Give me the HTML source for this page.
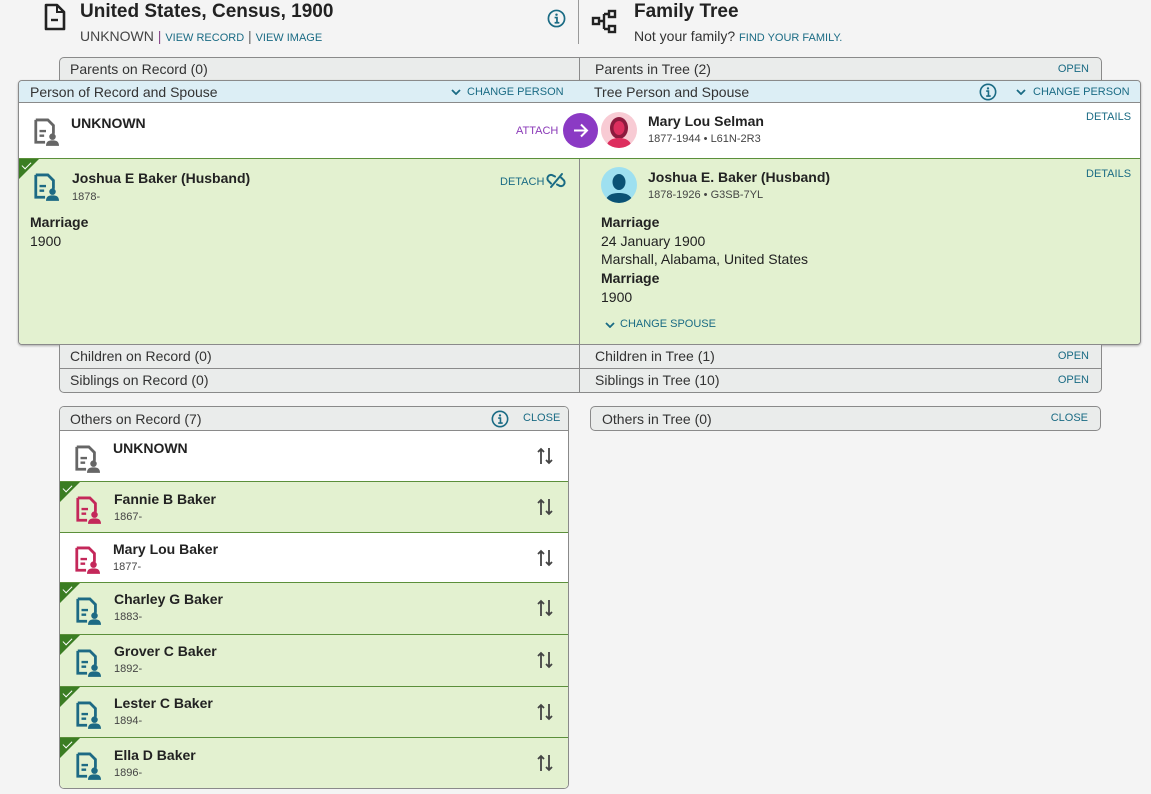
<!DOCTYPE html>
<html><head><meta charset="utf-8"><style>
*{box-sizing:border-box;margin:0;padding:0}
body{width:1151px;height:794px;background:#f4f4f4;font-family:"Liberation Sans",sans-serif;color:#222;position:relative;overflow:hidden}
.a{position:absolute}
.lnk{color:#1a6b84;font-size:11px;text-transform:uppercase}
.bar{position:absolute;background:#eaeceb;border:1px solid #8a8a8a;font-size:14px;color:#333}
.bar span{position:absolute;top:3px}
.nm{font-weight:bold;font-size:14px;color:#222}
.sm{font-size:11px;color:#444}
.tri{position:absolute;left:0;top:0;width:0;height:0;border-top:20px solid #3b7d23;border-right:20px solid transparent}
.tri:after{content:"";position:absolute;left:3px;top:-17px;width:8px;height:4px;border-left:1.5px solid #fff;border-bottom:1.5px solid #fff;transform:rotate(-45deg)}
.row{position:absolute;left:0;width:509px;border-bottom:1px solid #8a8a8a}
.row.g{background:#e3f1d0;border:1px solid #5b8f3a;left:-1px;width:511px}
.sw{position:absolute;right:16px;top:16px}
</style></head><body>
<svg width="0" height="0" style="position:absolute">
<defs>
<symbol id="rec" viewBox="0 0 28 30"><path d="M3 2h13l6 6v9" fill="none" stroke="currentColor" stroke-width="3"/><path d="M3 2v24h10" fill="none" stroke="currentColor" stroke-width="3"/><path d="M7 14h7M7 19h5" stroke="currentColor" stroke-width="2.5"/><circle cx="21" cy="20" r="3.5" fill="currentColor"/><path d="M14 30c0-5 3-6 7-6s7 1 7 6z" fill="currentColor"/></symbol>
<symbol id="swp" viewBox="0 0 16 18"><path d="M4 17V2M1 5l3-3 3 3M12 1v15M9 13l3 3 3-3" fill="none" stroke="#444" stroke-width="1.8"/></symbol>
<symbol id="inf" viewBox="0 0 20 20"><circle cx="10" cy="10" r="8.5" fill="none" stroke="#1a6b84" stroke-width="1.8"/><circle cx="10" cy="6" r="1.3" fill="#1a6b84"/><path d="M8 9h2.5v5.5M8 14.5h5" fill="none" stroke="#1a6b84" stroke-width="1.8"/></symbol>
<symbol id="chev" viewBox="0 0 10 6"><path d="M1 1l4 4 4-4" fill="none" stroke="#1a6b84" stroke-width="1.8"/></symbol>
</defs></svg>

<svg class="a" style="left:44px;top:3px" width="22" height="28" viewBox="0 0 22 28"><path d="M2 2h11l7 7v17H2z" fill="none" stroke="#222" stroke-width="2.6" stroke-linejoin="round"/><path d="M13 2v7h7" fill="none" stroke="#222" stroke-width="2"/><path d="M7 17h7" stroke="#222" stroke-width="2.4"/></svg>
<div class="a" style="left:80px;top:1px;font-size:19px;font-weight:bold;color:#222">United States, Census, 1900</div>
<div class="a" style="left:80px;top:28px;font-size:14px;color:#444">UNKNOWN <span style="color:#8a4a8a">|</span> <span class="lnk">View Record</span> <span style="color:#666">|</span> <span class="lnk">View Image</span></div>
<svg class="a" style="left:547px;top:9px" width="19" height="19"><use href="#inf"/></svg>
<div class="a" style="left:578px;top:0;width:1px;height:44px;background:#999"></div>
<svg class="a" style="left:591px;top:9px" width="30" height="26" viewBox="0 0 30 26"><g fill="none" stroke="#222" stroke-width="2.4"><rect x="2" y="9" width="6" height="6"/><rect x="18" y="2" width="6" height="6"/><rect x="18" y="17" width="6" height="6"/><path d="M8 12h5M13 5v15M13 5h5M13 20h5"/></g></svg>
<div class="a" style="left:634px;top:1px;font-size:19px;font-weight:bold">Family Tree</div>
<div class="a" style="left:634px;top:28px;font-size:14px;color:#333">Not your family? <span class="lnk">Find Your Family.</span></div>

<div class="bar" style="left:59px;top:57px;width:1043px;height:25px;border-radius:5px 5px 0 0">
<span style="left:10px">Parents on Record (0)</span>
<div class="a" style="left:519px;top:0;width:1px;height:24px;background:#8a8a8a"></div>
<span style="left:535px">Parents in Tree (2)</span>
<span class="lnk" style="right:12px;top:5px">Open</span></div>

<div class="a" style="left:18px;top:80px;width:1123px;height:265px;border:1px solid #8a8a8a;border-radius:4px;background:#fff;box-shadow:0 1px 2px rgba(0,0,0,.3);overflow:hidden">
 <div class="a" style="left:0;top:0;width:1121px;height:22px;background:#dceef5;border-bottom:1px solid #8a8a8a;font-size:14px;color:#333">
  <span class="a" style="left:11px;top:3px">Person of Record and Spouse</span>
  <svg class="a" style="left:432px;top:8px" width="10" height="6"><use href="#chev"/></svg>
  <span class="a lnk" style="left:448px;top:5px">Change Person</span>
  <span class="a" style="left:575px;top:3px">Tree Person and Spouse</span>
  <svg class="a" style="left:960px;top:2px" width="18" height="18"><use href="#inf"/></svg>
  <svg class="a" style="left:997px;top:8px" width="10" height="6"><use href="#chev"/></svg>
  <span class="a lnk" style="left:1014px;top:5px">Change Person</span>
 </div>
 <svg class="a" style="left:14px;top:37px;color:#666" width="26" height="28"><use href="#rec"/></svg>
 <div class="a nm" style="left:52px;top:34px">UNKNOWN</div>
 <div class="a" style="left:497px;top:44px;font-size:11px;color:#8b3ab8">ATTACH</div>
 <div class="a" style="left:544px;top:32px;width:35px;height:35px;border-radius:50%;background:#8b3ac4"><svg width="35" height="35"><path d="M11 17.5h13M18 11.5l6 6-6 6" fill="none" stroke="#fff" stroke-width="2"/></svg></div>
 <div class="a" style="left:582px;top:31px;width:36px;height:36px;border-radius:50%;background:#f8cbd4;overflow:hidden"><svg width="36" height="36"><ellipse cx="18" cy="16" rx="9" ry="11" fill="#8c1a3e"/><ellipse cx="18" cy="16" rx="5.5" ry="7" fill="#dd2e5e"/><path d="M5 36c1-8 7-10 13-10s12 2 13 10z" fill="#dd2e5e"/></svg></div>
 <div class="a nm" style="left:629px;top:32px">Mary Lou Selman</div>
 <div class="a sm" style="left:629px;top:52px">1877-1944 • L61N-2R3</div>
 <div class="a lnk" style="left:1067px;top:30px">Details</div>
 <div class="a" style="left:0;top:77px;width:1121px;height:186px;background:#e3f1d0;border-top:1px solid #5b8f3a">
  <div class="tri"></div>
  <svg class="a" style="left:14px;top:14px;color:#1d6a84" width="26" height="28"><use href="#rec"/></svg>
  <div class="a nm" style="left:53px;top:11px">Joshua E Baker (Husband)</div>
  <div class="a sm" style="left:53px;top:32px">1878-</div>
  <div class="a lnk" style="left:481px;top:17px">Detach</div>
  <svg class="a" style="left:527px;top:13px" width="20" height="17" viewBox="0 0 20 17"><path d="M9 4.5L7 3.5a3.5 3.5 0 0 0-4 6l2 2M11 12.5l2 1a3.5 3.5 0 0 0 4-6l-2-2M5 15L16 2" fill="none" stroke="#1a6b84" stroke-width="2" stroke-linecap="round"/></svg>
  <div class="a" style="left:11px;top:55px;font-size:14px;font-weight:bold">Marriage</div>
  <div class="a" style="left:11px;top:74px;font-size:14px">1900</div>
  <div class="a" style="left:560px;top:0;width:1px;height:186px;background:#8a8a8a"></div>
  <div class="a" style="left:582px;top:8px;width:36px;height:36px;border-radius:50%;background:#9ee0f0;overflow:hidden"><svg width="36" height="36"><ellipse cx="18" cy="15" rx="6.5" ry="8" fill="#0b5274"/><path d="M4 36c1-8 7-10 14-10s13 2 14 10z" fill="#0b5274"/></svg></div>
  <div class="a nm" style="left:629px;top:10px">Joshua E. Baker (Husband)</div>
  <div class="a sm" style="left:629px;top:30px">1878-1926 • G3SB-7YL</div>
  <div class="a lnk" style="left:1067px;top:9px">Details</div>
  <div class="a" style="left:582px;top:54px;font-size:14px;line-height:18.7px"><b>Marriage</b><br>24 January 1900<br>Marshall, Alabama, United States<br><b>Marriage</b><br>1900</div>
  <svg class="a" style="left:586px;top:163px" width="10" height="6"><use href="#chev"/></svg>
  <div class="a lnk" style="left:601px;top:159px">Change Spouse</div>
 </div>
</div>

<div class="bar" style="left:59px;top:344px;width:1043px;height:49px;border-radius:0 0 5px 5px">
<div class="a" style="left:519px;top:0;width:1px;height:48px;background:#8a8a8a"></div>
<div class="a" style="left:0;top:23px;width:1041px;height:1px;background:#8a8a8a"></div>
<span style="left:10px">Children on Record (0)</span>
<span style="left:535px">Children in Tree (1)</span>
<span class="lnk" style="right:12px;top:5px">Open</span>
<span style="left:10px;top:27px">Siblings on Record (0)</span>
<span style="left:535px;top:27px">Siblings in Tree (10)</span>
<span class="lnk" style="right:12px;top:29px">Open</span>
</div>

<div class="a" style="left:59px;top:406px;width:510px;height:383px;border:1px solid #8a8a8a;border-radius:5px;background:#fff;overflow:hidden">
 <div class="a" style="left:0;top:0;width:508px;height:24px;background:#eaeceb;border-bottom:1px solid #8a8a8a;font-size:14px;color:#333">
  <span class="a" style="left:10px;top:4px">Others on Record (7)</span>
  <svg class="a" style="left:431px;top:3px" width="18" height="18"><use href="#inf"/></svg>
  <span class="a lnk" style="left:463px;top:5px">Close</span>
 </div>
 <div class="row" style="top:24px;height:51px"><svg class="a" style="left:14px;top:14px;color:#666" width="26" height="28"><use href="#rec"/></svg><div class="a nm" style="left:53px;top:9px">UNKNOWN</div><svg class="sw" width="16" height="18"><use href="#swp"/></svg></div>
 <div class="row g" style="top:74px;height:52px"><div class="tri"></div><svg class="a" style="left:15px;top:14px;color:#c4285a" width="26" height="28"><use href="#rec"/></svg><div class="a nm" style="left:54px;top:9px">Fannie B Baker</div><div class="a sm" style="left:54px;top:29px">1867-</div><svg class="sw" width="16" height="18"><use href="#swp"/></svg></div>
 <div class="row" style="top:126px;height:50px"><svg class="a" style="left:14px;top:13px;color:#c4285a" width="26" height="28"><use href="#rec"/></svg><div class="a nm" style="left:53px;top:8px">Mary Lou Baker</div><div class="a sm" style="left:53px;top:28px">1877-</div><svg class="sw" width="16" height="18"><use href="#swp"/></svg></div>
 <div class="row g" style="top:175px;height:53px"><div class="tri"></div><svg class="a" style="left:15px;top:14px;color:#1d6a84" width="26" height="28"><use href="#rec"/></svg><div class="a nm" style="left:54px;top:8px">Charley G Baker</div><div class="a sm" style="left:54px;top:28px">1883-</div><svg class="sw" width="16" height="18"><use href="#swp"/></svg></div>
 <div class="row g" style="top:227px;height:53px"><div class="tri"></div><svg class="a" style="left:15px;top:14px;color:#1d6a84" width="26" height="28"><use href="#rec"/></svg><div class="a nm" style="left:54px;top:8px">Grover C Baker</div><div class="a sm" style="left:54px;top:28px">1892-</div><svg class="sw" width="16" height="18"><use href="#swp"/></svg></div>
 <div class="row g" style="top:279px;height:53px"><div class="tri"></div><svg class="a" style="left:15px;top:14px;color:#1d6a84" width="26" height="28"><use href="#rec"/></svg><div class="a nm" style="left:54px;top:8px">Lester C Baker</div><div class="a sm" style="left:54px;top:28px">1894-</div><svg class="sw" width="16" height="18"><use href="#swp"/></svg></div>
 <div class="row g" style="top:330px;height:53px"><div class="tri"></div><svg class="a" style="left:15px;top:14px;color:#1d6a84" width="26" height="28"><use href="#rec"/></svg><div class="a nm" style="left:54px;top:9px">Ella D Baker</div><div class="a sm" style="left:54px;top:29px">1896-</div><svg class="sw" width="16" height="18"><use href="#swp"/></svg></div>
</div>

<div class="bar" style="left:590px;top:406px;width:511px;height:25px;border-radius:5px">
<span style="left:11px;top:4px">Others in Tree (0)</span>
<span class="lnk" style="right:12px;top:5px">Close</span></div>
</body></html>
